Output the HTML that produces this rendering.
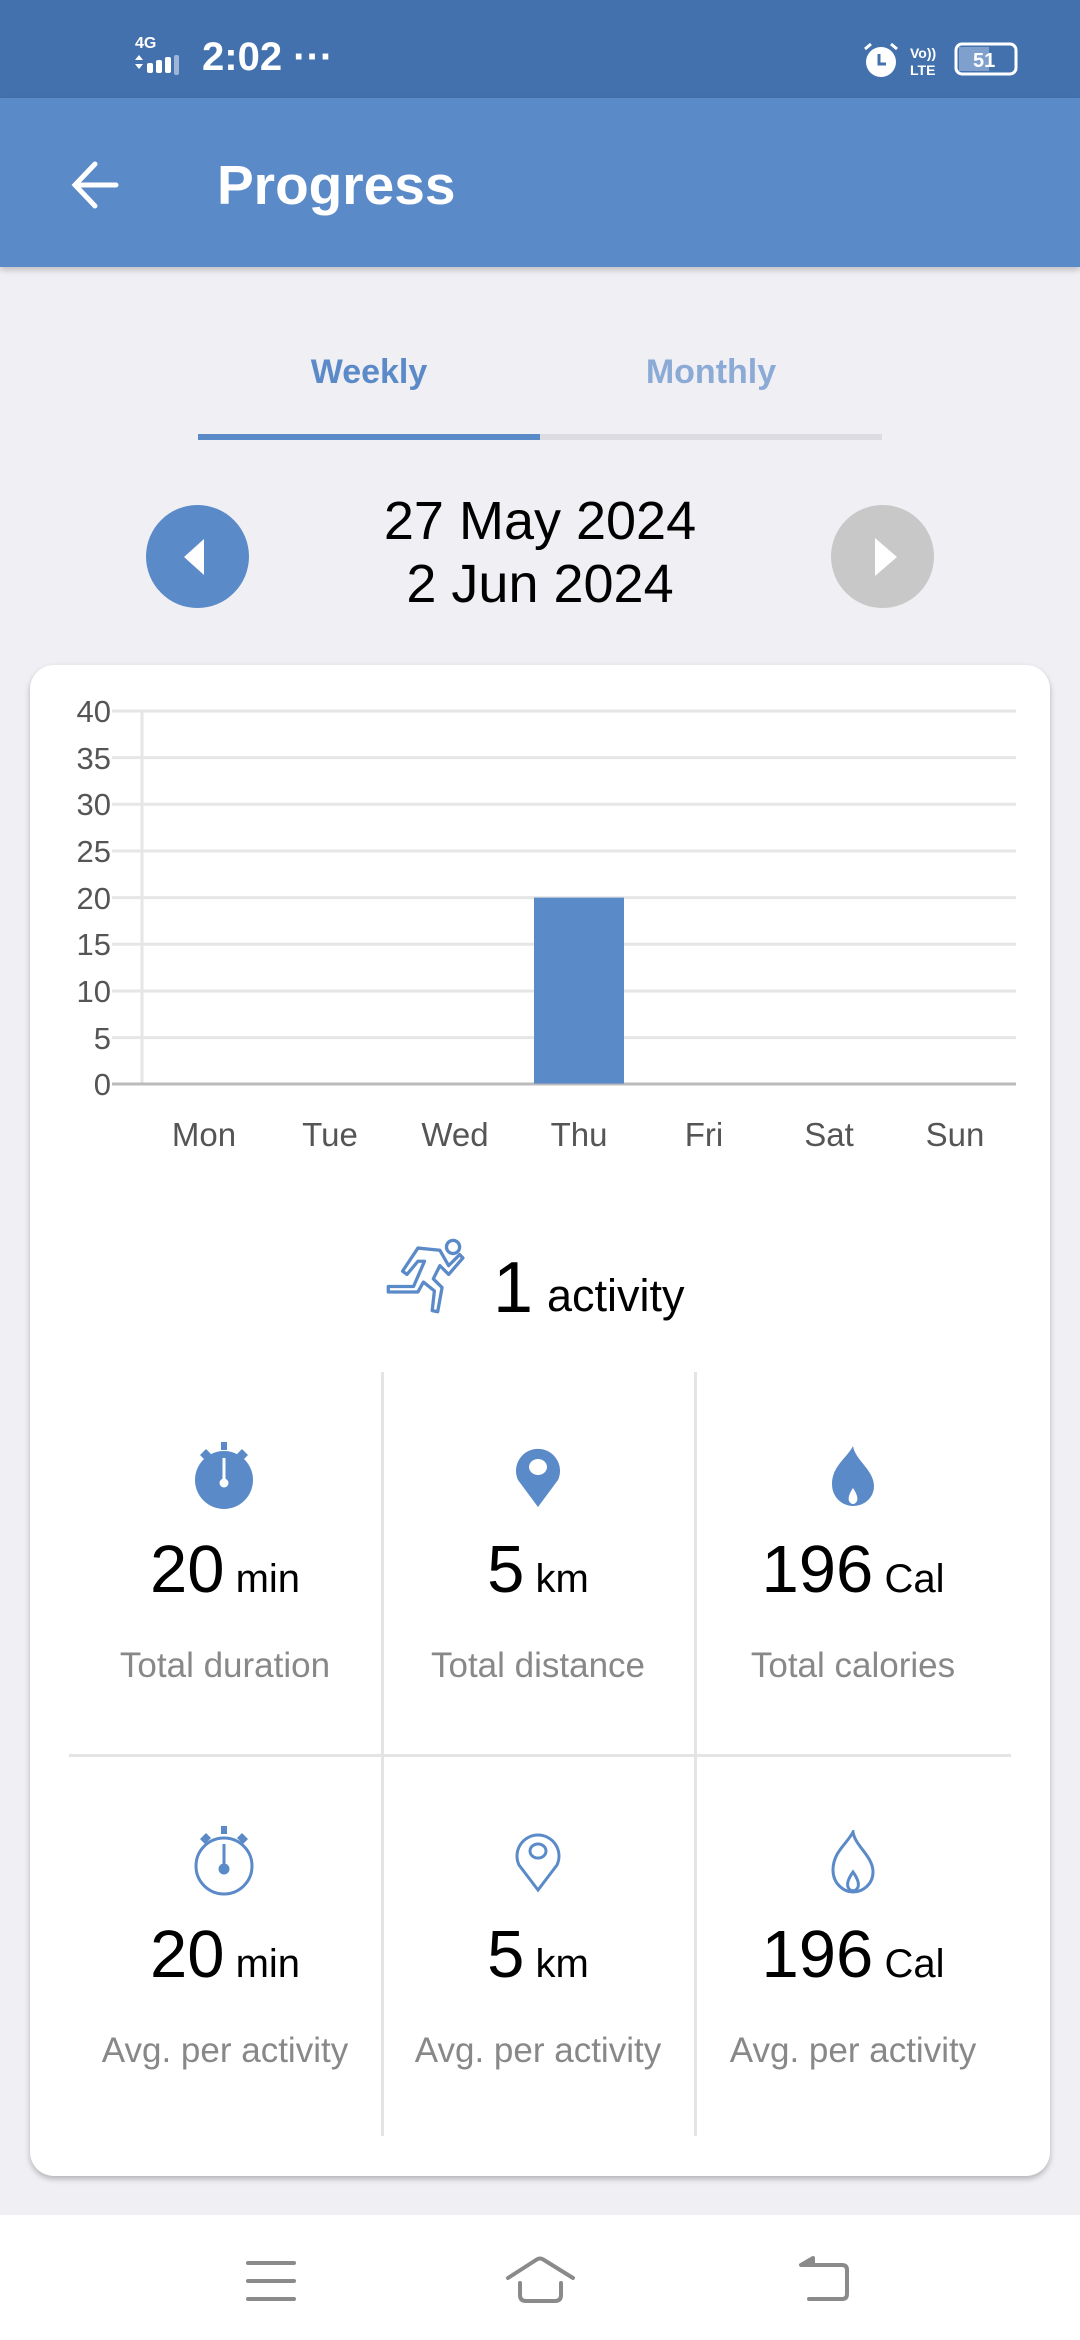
<!DOCTYPE html>
<html><head><meta charset="utf-8"><style>
*{margin:0;padding:0;box-sizing:border-box}
body{width:1080px;height:2340px;background:#efeff4;font-family:"Liberation Sans",sans-serif;position:relative;overflow:hidden}
.abs{position:absolute}
.t{position:absolute;white-space:nowrap}
</style></head><body>
<div class="abs" style="left:0;top:0;width:1080px;height:98px;background:#4371ad"></div>
<div class="t" style="left:135px;top:36px;font-size:16px;color:#fff;font-weight:bold;line-height:16px">4G</div>
<svg class="abs" style="left:135px;top:55px" width="55" height="22"><path d="M4 0 L8 5 L0 5Z M0 9 L8 9 L4 14Z" fill="#fff"/><rect x="12" y="8" width="6" height="10" rx="2" fill="#fff"/><rect x="21" y="5" width="6" height="13" rx="2" fill="#fff"/><rect x="30" y="2" width="6" height="16" rx="2" fill="#fff"/><rect x="39" y="0" width="5" height="20" rx="2" fill="#9db5d8"/></svg>
<div class="t" style="left:202px;top:35px;font-size:40px;color:#fff;font-weight:bold;line-height:44px">2:02 ···</div>
<svg class="abs" style="left:860px;top:40px" width="160" height="40"><circle cx="21" cy="22" r="15" fill="#fff"/><path d="M19 14v10h7" stroke="#4371ad" stroke-width="3" fill="none"/><path d="M5 9 l6-5 M37 9 l-6-5" stroke="#fff" stroke-width="3"/><text x="50" y="18" font-size="14" font-weight="bold" fill="#fff" font-family="Liberation Sans">Vo))</text><text x="50" y="35" font-size="14" font-weight="bold" fill="#fff" font-family="Liberation Sans">LTE</text><rect x="96" y="4" width="60" height="30" rx="6" fill="none" stroke="#fff" stroke-width="3"/><rect x="99" y="7" width="30" height="24" fill="#7f9fcc"/><text x="113" y="27" font-size="20" font-weight="bold" fill="#fff" font-family="Liberation Sans">51</text></svg>
<div class="abs" style="left:0;top:98px;width:1080px;height:169px;background:#5b8ac8;box-shadow:0 3px 6px rgba(0,0,0,.2)"></div>
<svg class="abs" style="left:70px;top:160px" width="52" height="52"><path d="M46 25H6 M25 4L5 25 25 46" stroke="#fff" stroke-width="5" fill="none" stroke-linecap="round"/></svg>
<div class="t" style="left:217px;top:152px;font-size:55px;color:#fff;font-weight:bold;line-height:66px">Progress</div>

<div class="t" style="left:198px;width:342px;top:352px;text-align:center;font-size:34px;color:#5b8ac8;font-weight:bold;line-height:40px">Weekly</div>
<div class="t" style="left:540px;width:342px;top:352px;text-align:center;font-size:34px;color:#8caad6;font-weight:bold;line-height:40px">Monthly</div>
<div class="abs" style="left:198px;top:434px;width:342px;height:6px;background:#5b8ac8"></div>
<div class="abs" style="left:540px;top:434px;width:342px;height:6px;background:#dcdce2"></div>

<div class="abs" style="left:146px;top:505px;width:103px;height:103px;border-radius:50%;background:#5b8ac8"></div>
<svg class="abs" style="left:180px;top:535px" width="30" height="45"><path d="M24 4 L4 22 L24 40" fill="#fff"/></svg>
<div class="abs" style="left:831px;top:505px;width:103px;height:103px;border-radius:50%;background:#c8c8c8"></div>
<svg class="abs" style="left:870px;top:535px" width="30" height="45"><path d="M5 3 L27 22 L5 41Z" fill="#fff"/></svg>
<div class="t" style="left:240px;width:600px;top:490px;text-align:center;font-size:54px;color:#000;line-height:62px">27 May 2024</div>
<div class="t" style="left:240px;width:600px;top:553px;text-align:center;font-size:54px;color:#000;line-height:62px">2 Jun 2024</div>

<div class="abs" style="left:30px;top:665px;width:1020px;height:1511px;background:#fff;border-radius:24px;box-shadow:0 3px 6px rgba(0,0,0,.25)"></div>

<svg class="abs" style="left:0;top:660px" width="1080" height="500" font-family="Liberation Sans" font-size="31" fill="#555">
<g stroke="#e6e6e6" stroke-width="3">
<line x1="112" x2="1016" y1="51" y2="51"/><line x1="112" x2="1016" y1="97.6" y2="97.6"/><line x1="112" x2="1016" y1="144.3" y2="144.3"/><line x1="112" x2="1016" y1="191" y2="191"/><line x1="112" x2="1016" y1="237.6" y2="237.6"/><line x1="112" x2="1016" y1="284.3" y2="284.3"/><line x1="112" x2="1016" y1="331" y2="331"/><line x1="112" x2="1016" y1="377.6" y2="377.6"/>
<line x1="142" x2="142" y1="51" y2="424"/></g>
<line x1="112" x2="1016" y1="424" y2="424" stroke="#bbb" stroke-width="3"/>
<rect x="534" y="237.6" width="90" height="186" fill="#5b8ac8"/>
<g text-anchor="end"><text x="111" y="62">40</text><text x="111" y="109">35</text><text x="111" y="155">30</text><text x="111" y="202">25</text><text x="111" y="249">20</text><text x="111" y="295">15</text><text x="111" y="342">10</text><text x="111" y="389">5</text><text x="111" y="435">0</text></g>
<g text-anchor="middle" font-size="33"><text x="204" y="486">Mon</text><text x="330" y="486">Tue</text><text x="455" y="486">Wed</text><text x="579" y="486">Thu</text><text x="704" y="486">Fri</text><text x="829" y="486">Sat</text><text x="955" y="486">Sun</text></g>
</svg>

<svg class="abs" style="left:385px;top:1237px" width="90" height="88" viewBox="0 0 82 80" fill="none" stroke="#5b8ac8" stroke-width="3" stroke-linejoin="round" stroke-linecap="round"><circle cx="62" cy="9" r="6"/><path d="M30 10 L50 12 L58 26 L68 16 L71 19 L58 34 L50 26 L44 38 L52 46 L48 68 L43 67 L45 49 L35 41 L30 50 L3 50 L3 45 L26 45 L36 22 L30 22 L20 34 L16 31 Z"/></svg>
<div class="t" style="left:493px;top:1248px;font-size:72px;color:#000;line-height:80px">1</div>
<div class="t" style="left:547px;top:1268px;font-size:45px;color:#000;line-height:56px">activity</div>

<div class="abs" style="left:381px;top:1372px;width:3px;height:764px;background:#e4e4e4"></div>
<div class="abs" style="left:694px;top:1372px;width:3px;height:764px;background:#e4e4e4"></div>
<div class="abs" style="left:69px;top:1754px;width:942px;height:3px;background:#e4e4e4"></div>

<svg class="abs" style="left:194px;top:1442px" width="60" height="70"><rect x="27" y="0" width="6" height="8" fill="#5b8ac8"/><path d="M6 13 l6-6 5 5-6 6z M54 13 l-6-6-5 5 6 6z" fill="#5b8ac8"/><circle cx="30" cy="38" r="29" fill="#5b8ac8"/><path d="M30 16 V40" stroke="#fff" stroke-width="3"/><circle cx="30" cy="41" r="4.5" fill="#fff"/></svg>
<svg class="abs" style="left:506px;top:1444px" width="64" height="66"><path d="M32 63 L12 36 A22 22 0 1 1 52 36 Z" fill="#5b8ac8"/><ellipse cx="32" cy="23" rx="9" ry="8" fill="#fff"/></svg>
<svg class="abs" style="left:823px;top:1444px" width="60" height="66"><path d="M30 2 C24 14 9 22 9 40 C9 54 20 62 30 62 C41 62 51 54 51 42 C51 26 32 16 30 2Z" fill="#5b8ac8"/><path d="M30 44 C26 50 25 54 26 57 C28 61 32 61 34 57 C35 54 34 50 30 44Z" fill="#fff"/></svg>
<svg class="abs" style="left:194px;top:1826px" width="60" height="74" fill="none" stroke="#5b8ac8" stroke-width="3"><rect x="27" y="0" width="6" height="8" fill="#5b8ac8" stroke="none"/><path d="M6 13 l6-6 5 5-6 6z M54 13 l-6-6-5 5 6 6z" fill="#5b8ac8" stroke="none"/><circle cx="30" cy="40" r="28"/><path d="M30 18 V42"/><circle cx="30" cy="43" r="4" fill="#5b8ac8"/></svg>
<svg class="abs" style="left:506px;top:1828px" width="64" height="66" fill="none" stroke="#5b8ac8" stroke-width="3"><path d="M32 62 L13 37 A21 21 0 1 1 51 37 Z"/><ellipse cx="32" cy="23" rx="8" ry="7"/></svg>
<svg class="abs" style="left:823px;top:1830px" width="60" height="66" fill="none" stroke="#5b8ac8" stroke-width="3"><path d="M30 2 C24 14 10 22 10 40 C10 54 21 62 30 62 C40 62 50 54 50 42 C50 26 32 16 30 2Z"/><path d="M30 42 C25 49 24 54 25 57 C27 62 33 62 35 57 C36 54 35 49 30 42Z"/></svg>

<div class="t" style="left:69px;width:312px;top:1532px;text-align:center;line-height:76px;color:#000"><span style="font-size:67px">20</span><span style="font-size:40px"> min</span></div>
<div class="t" style="left:382px;width:312px;top:1532px;text-align:center;line-height:76px;color:#000"><span style="font-size:67px">5</span><span style="font-size:40px"> km</span></div>
<div class="t" style="left:697px;width:312px;top:1532px;text-align:center;line-height:76px;color:#000"><span style="font-size:67px">196</span><span style="font-size:40px"> Cal</span></div>
<div class="t" style="left:69px;width:312px;top:1644px;text-align:center;font-size:35px;color:#888;line-height:44px">Total duration</div>
<div class="t" style="left:382px;width:312px;top:1644px;text-align:center;font-size:35px;color:#888;line-height:44px">Total distance</div>
<div class="t" style="left:697px;width:312px;top:1644px;text-align:center;font-size:35px;color:#888;line-height:44px">Total calories</div>

<div class="t" style="left:69px;width:312px;top:1917px;text-align:center;line-height:76px;color:#000"><span style="font-size:67px">20</span><span style="font-size:40px"> min</span></div>
<div class="t" style="left:382px;width:312px;top:1917px;text-align:center;line-height:76px;color:#000"><span style="font-size:67px">5</span><span style="font-size:40px"> km</span></div>
<div class="t" style="left:697px;width:312px;top:1917px;text-align:center;line-height:76px;color:#000"><span style="font-size:67px">196</span><span style="font-size:40px"> Cal</span></div>
<div class="t" style="left:69px;width:312px;top:2029px;text-align:center;font-size:35px;color:#888;line-height:44px">Avg. per activity</div>
<div class="t" style="left:382px;width:312px;top:2029px;text-align:center;font-size:35px;color:#888;line-height:44px">Avg. per activity</div>
<div class="t" style="left:697px;width:312px;top:2029px;text-align:center;font-size:35px;color:#888;line-height:44px">Avg. per activity</div>

<div class="abs" style="left:0;top:2215px;width:1080px;height:125px;background:#fff"></div>
<svg class="abs" style="left:0;top:2215px" width="1080" height="125" fill="none" stroke="#8a8a8a" stroke-width="4" stroke-linecap="round" stroke-linejoin="round">
<path d="M248 48H294 M248 66H294 M248 84H294"/>
<path d="M508 63 L536 45 Q540 42 544 45 L573 63 M520 68 V80 Q520 86 526 86 H555 Q561 86 561 80 V68"/>
<path d="M803 50 H842 Q847 50 847 55 V79 Q847 84 842 84 H809"/>
<path d="M813 43 L801 50 L813 50Z" fill="#8a8a8a"/>
</svg>
</body></html>
